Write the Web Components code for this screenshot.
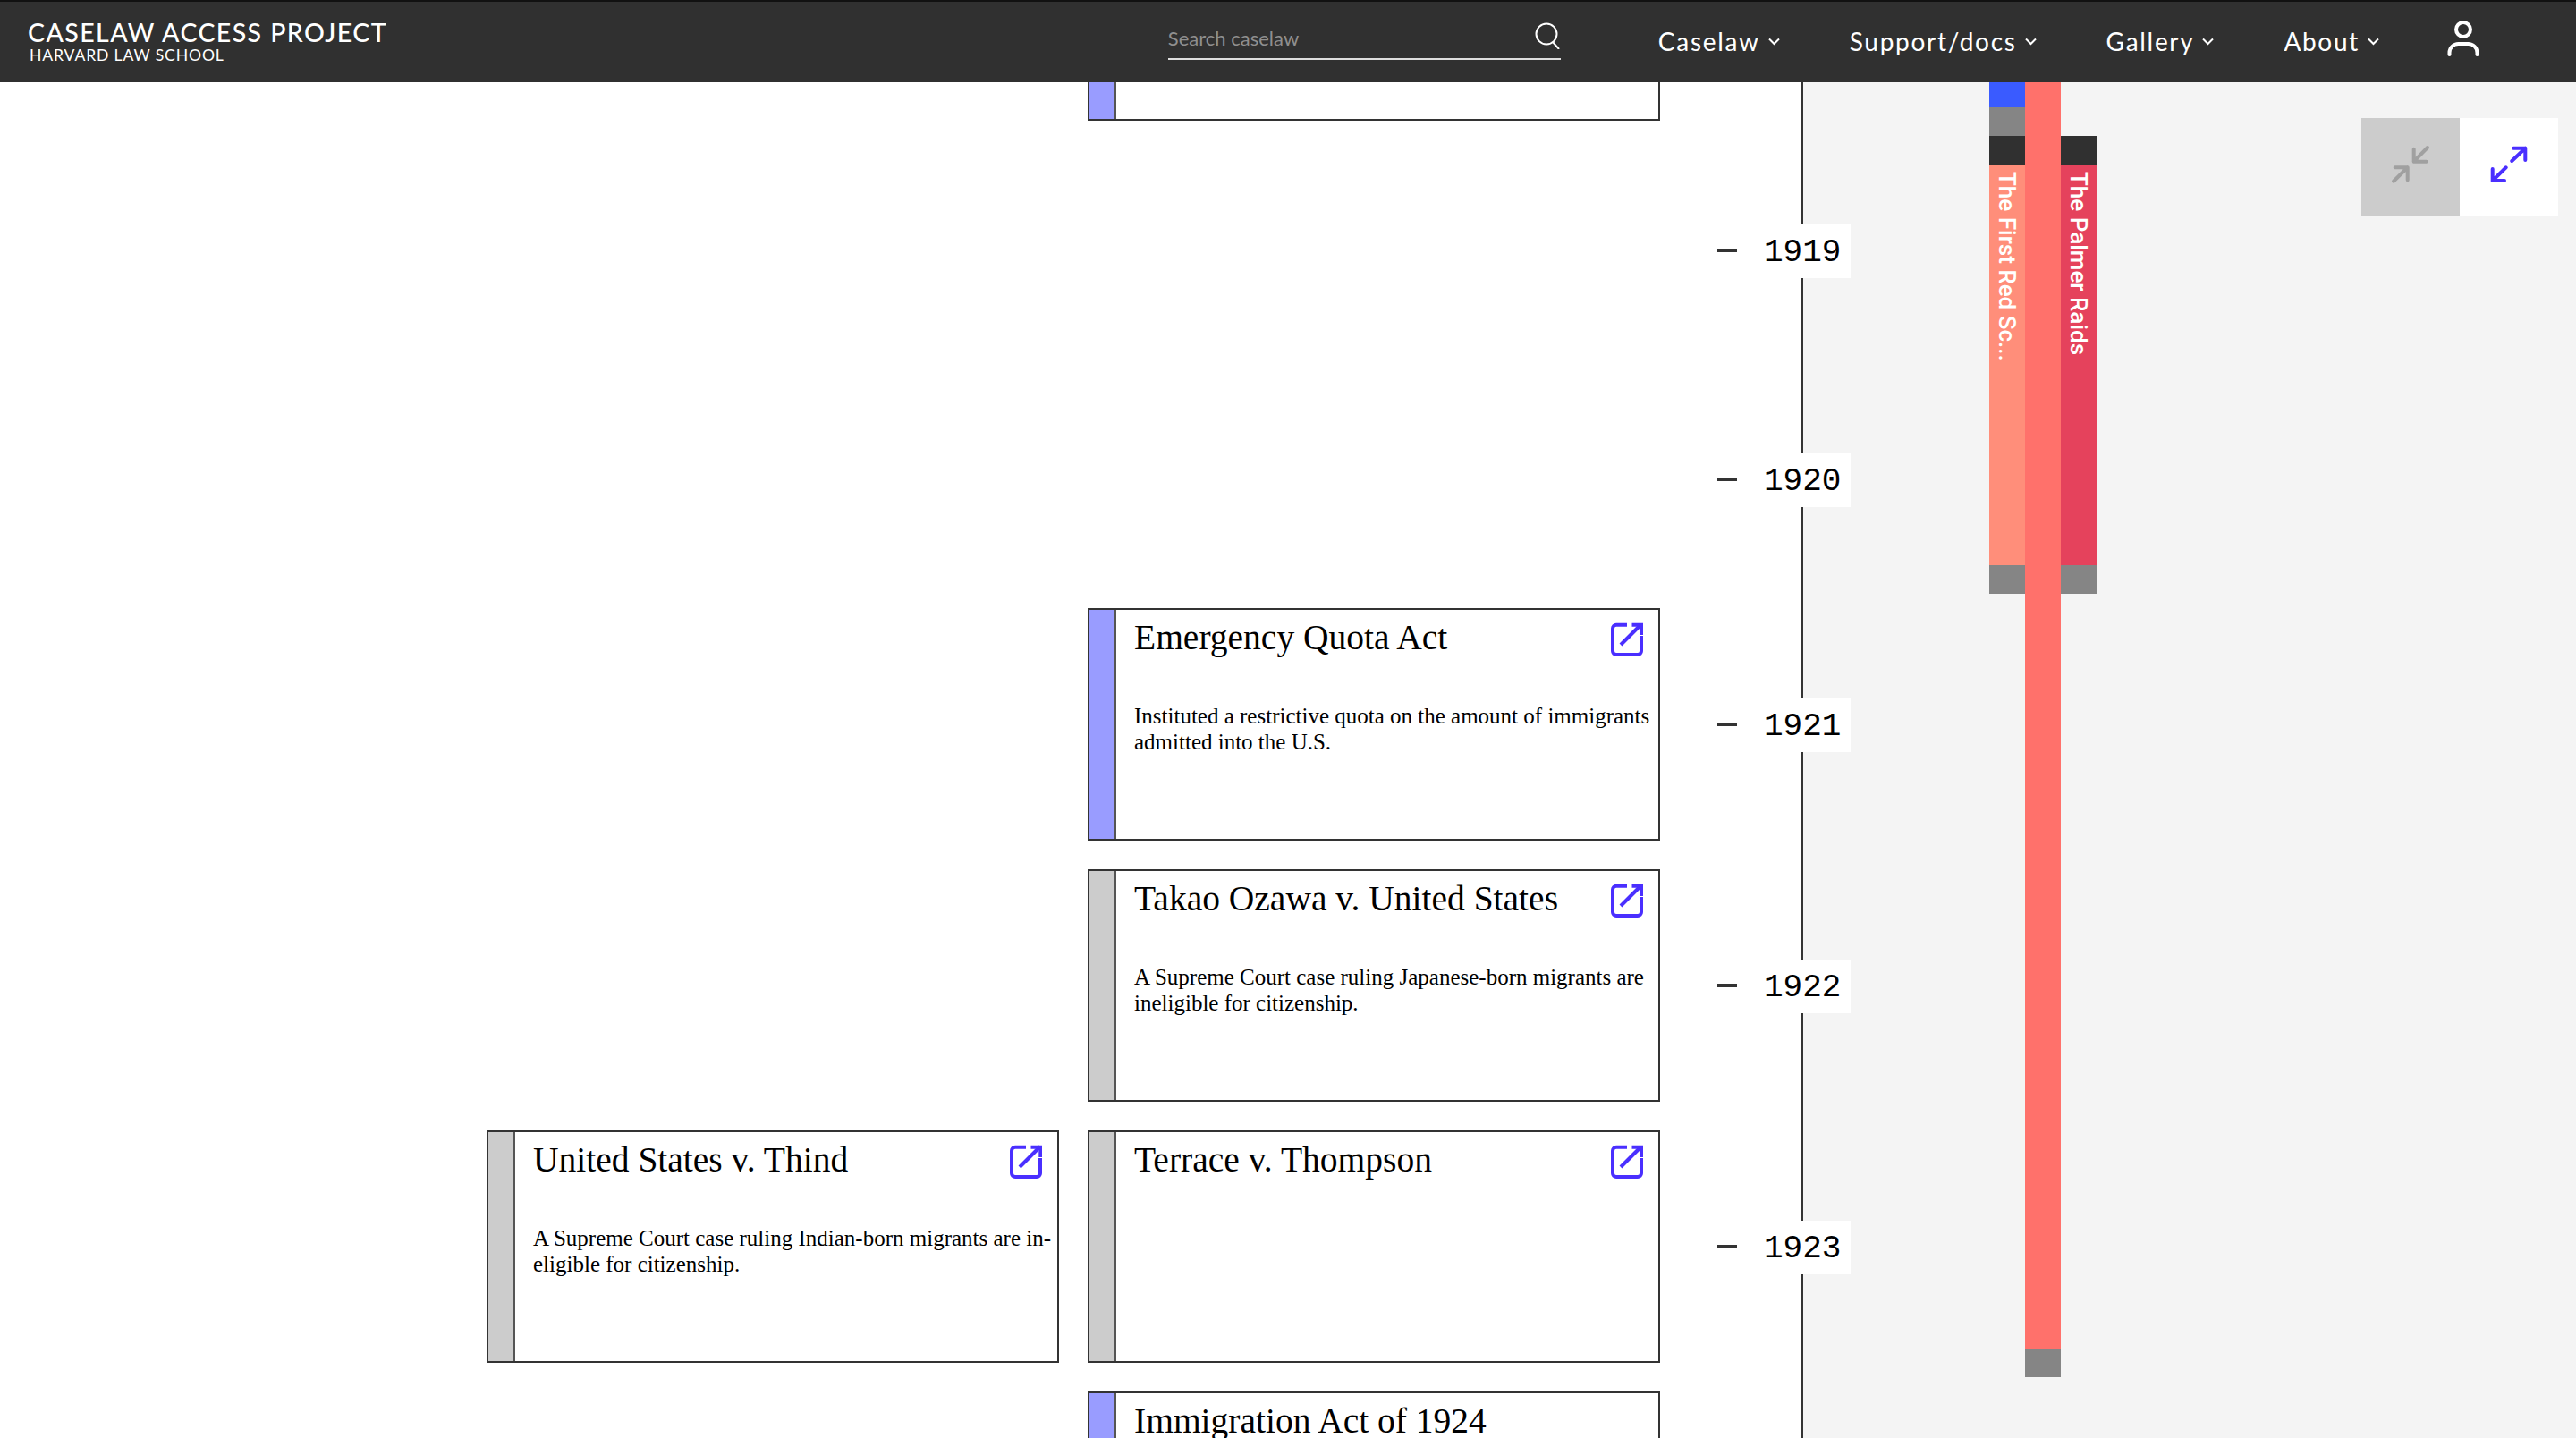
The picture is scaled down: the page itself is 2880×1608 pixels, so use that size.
<!DOCTYPE html>
<html lang="en">
<head>
<meta charset="utf-8">
<title>Caselaw Access Project</title>
<style>
  html, body { margin: 0; height: 100%; overflow: hidden; background: #fff; }
  body { display: flex; flex-direction: column; height: 1608px; }
</style>
</head>
<body>
<cap-header>
  <nav-item>Caselaw</nav-item>
  <nav-item>Support/docs</nav-item>
  <nav-item>Gallery</nav-item>
  <nav-item>About</nav-item>
</cap-header>

<timeline-view>
  <case-column slot="cases" style="--start: 1172px">
    <case-card kind="case">
      <span slot="title">United States v. Thind</span>
      A Supreme Court case ruling Indian-born migrants are in-<br>eligible for citizenship.
    </case-card>
  </case-column>
  <case-column slot="cases" style="--start: -217px">
    <case-card kind="law" nolink style="margin-bottom: 513px"></case-card>
    <case-card kind="law">
      <span slot="title">Emergency Quota Act</span>
      Instituted a restrictive quota on the amount of immigrants<br>admitted into the U.S.
    </case-card>
    <case-card kind="case">
      <span slot="title">Takao Ozawa v. United States</span>
      A Supreme Court case ruling Japanese-born migrants are<br>ineligible for citizenship.
    </case-card>
    <case-card kind="case">
      <span slot="title">Terrace v. Thompson</span>
    </case-card>
    <case-card kind="law" nolink>
      <span slot="title">Immigration Act of 1924</span>
    </case-card>
  </case-column>

  <year-mark slot="years" style="margin-top: 159px">1919</year-mark>
  <year-mark slot="years" style="margin-top: 196px">1920</year-mark>
  <year-mark slot="years" style="margin-top: 214px">1921</year-mark>
  <year-mark slot="years" style="margin-top: 232px">1922</year-mark>
  <year-mark slot="years" style="margin-top: 232px">1923</year-mark>

  <event-lane slot="events">
    <event-seg style="--c: #3a5bff; --h: 28px"></event-seg>
    <event-seg style="--c: #858585; --h: 32px"></event-seg>
    <event-seg style="--c: #303030; --h: 32px"></event-seg>
    <event-seg style="--c: #ff8e7a; --h: 448px">The First Red Sc...</event-seg>
    <event-seg style="--c: #858585; --h: 32px"></event-seg>
  </event-lane>
  <event-lane slot="events">
    <event-seg style="--c: #ff716b; --h: 1416px"></event-seg>
    <event-seg style="--c: #858585; --h: 32px"></event-seg>
  </event-lane>
  <event-lane slot="events" style="--start: 60px">
    <event-seg style="--c: #303030; --h: 32px"></event-seg>
    <event-seg style="--c: #e5425c; --h: 448px">The Palmer Raids</event-seg>
    <event-seg style="--c: #858585; --h: 32px"></event-seg>
  </event-lane>
  <zoom-controls slot="overlay"></zoom-controls>
</timeline-view>

<script>
class CapHeader extends HTMLElement {
    connectedCallback() {
        this.attachShadow({ mode: "open" }).innerHTML = `
            <style>
                :host {
                    display: flex;
                    flex: none;
                    box-sizing: border-box;
                    height: 92px;
                    justify-content: space-between;
                    padding: 0 107px 0 31px;
                    background: #303030;
                    border-top: 2px solid #111;
                    color: #fff;
                }
                .logo { font-family: Lato, sans-serif; padding-top: 19px; }
                .name { font-size: 28.5px; line-height: 30px; font-weight: 500; letter-spacing: 1.42px; }
                .school { font-size: 17.6px; line-height: 20px; margin: 1px 0 0 2px; letter-spacing: 0.85px; }
                .right { display: flex; align-items: flex-start; }
                .search {
                    display: flex;
                    justify-content: space-between;
                    box-sizing: border-box;
                    width: 439px;
                    height: 65px;
                    margin-right: 109px;
                    border-bottom: 2px solid #ddd;
                    font: 22px Lato, sans-serif;
                    color: #8f8f8f;
                }
                .search span { padding-top: 27px; }
                .search svg { margin-top: 23px; }
                nav { display: flex; gap: 78px; }
                .user { margin: 20px 0 0 75px; }
            </style>
            <div class="logo">
                <div class="name">CASELAW ACCESS PROJECT</div>
                <div class="school">HARVARD LAW SCHOOL</div>
            </div>
            <div class="right">
                <div class="search">
                    <span>Search caselaw</span>
                    <svg width="30" height="30" viewBox="0 0 30 30" fill="none" stroke="#fff" stroke-width="2">
                        <circle cx="14" cy="13" r="11.5"/>
                        <path d="M21 22l7 8"/>
                    </svg>
                </div>
                <nav><slot></slot></nav>
                <svg class="user" width="38" height="42" viewBox="0 0 38 42" fill="none" stroke="#fff" stroke-width="4" stroke-linecap="round">
                    <circle cx="19" cy="11" r="8"/>
                    <path d="M3.5 39v-2a10 10 0 0 1 10-10h11a10 10 0 0 1 10 10v2"/>
                </svg>
            </div>
        `;
    }
}

class NavItem extends HTMLElement {
    connectedCallback() {
        this.attachShadow({ mode: "open" }).innerHTML = `
            <style>
                :host {
                    display: flex;
                    gap: 9px;
                    padding-top: 23px;
                    font: 28px/42px Lato, sans-serif;
                    letter-spacing: 1.7px;
                    color: #fff;
                }
                svg { margin-top: 17px; }
            </style>
            <slot></slot>
            <svg width="13" height="9" viewBox="0 0 13 9" fill="none" stroke="#fff" stroke-width="2">
                <path d="M1 1.5l5.5 5.5L12 1.5"/>
            </svg>
        `;
    }
}

class TimelineView extends HTMLElement {
    connectedCallback() {
        this.attachShadow({ mode: "open" }).innerHTML = `
            <style>
                :host {
                    display: grid;
                    flex: 1;
                    grid-template-columns: 1856px 160px 1fr;
                    min-height: 0;
                    overflow: hidden;
                    background: #fff;
                }
                .cases { display: flex; gap: 32px; padding-left: 544px; }
                .axis {
                    position: relative;
                    z-index: 1;
                    display: flex;
                    flex-direction: column;
                    box-sizing: border-box;
                    border-right: 2px solid #333;
                }
                .events {
                    position: relative;
                    display: flex;
                    padding-left: 208px;
                    background: #f4f4f4;
                }
            </style>
            <div class="cases"><slot name="cases"></slot></div>
            <div class="axis"><slot name="years"></slot></div>
            <div class="events"><slot name="events"></slot><slot name="overlay"></slot></div>
        `;
    }
}

class CaseColumn extends HTMLElement {
    connectedCallback() {
        this.attachShadow({ mode: "open" }).innerHTML = `
            <style>
                :host {
                    display: flex;
                    flex-direction: column;
                    gap: 32px;
                    width: 640px;
                    margin-top: var(--start, 0);
                }
            </style>
            <slot></slot>
        `;
    }
}

class CaseCard extends HTMLElement {
    connectedCallback() {
        const stripe = this.getAttribute("kind") === "law" ? "#999cff" : "#ccc";
        const link = this.hasAttribute("nolink") ? "" : `
            <svg width="36" height="38" viewBox="11 11 36 38" fill="none" stroke="#4a2fff" stroke-width="4">
                <path d="M29 13.7H17a4 4 0 0 0-4 4V43a4 4 0 0 0 4 4h24a4 4 0 0 0 4-4V26"/>
                <path d="M22 36l23-23"/>
                <path d="M34.5 13.7h10.8V25"/>
            </svg>`;
        this.attachShadow({ mode: "open" }).innerHTML = `
            <style>
                :host {
                    display: grid;
                    flex: none;
                    grid-template-columns: 30px 1fr;
                    box-sizing: border-box;
                    height: 260px;
                    border: 2px solid #333;
                    font-family: "Liberation Serif", serif;
                    color: #000;
                    background: #fff;
                }
                .stripe { background: ${stripe}; border-right: 2px solid #555; }
                .body { padding: 0 0 0 20px; min-width: 0; }
                .head { display: flex; justify-content: space-between; height: 104px; padding: 14px 17px 0 0; box-sizing: border-box; }
                .title { margin-top: -7px; font-size: 39.5px; line-height: 48px; }
                svg { flex: none; }
                .desc { font-size: 25px; line-height: 29px; white-space: nowrap; }
            </style>
            <div class="stripe"></div>
            <div class="body">
                <div class="head">
                    <div class="title"><slot name="title"></slot></div>
                    ${link}
                </div>
                <div class="desc"><slot></slot></div>
            </div>
        `;
    }
}

class YearMark extends HTMLElement {
    connectedCallback() {
        this.attachShadow({ mode: "open" }).innerHTML = `
            <style>
                :host {
                    display: flex;
                    flex: none;
                    align-items: center;
                    width: 149px;
                    height: 60px;
                    margin-left: 64px;
                    font: 36px/63px "Liberation Mono", monospace;
                    color: #000;
                }
                .dash { flex: none; width: 22px; height: 4px; margin-top: -3px; background: #333; }
                .label {
                    flex: none;
                    box-sizing: border-box;
                    width: 109px;
                    height: 60px;
                    margin-left: 18px;
                    padding-left: 12px;
                    background: #fff;
                }
            </style>
            <div class="dash"></div>
            <div class="label"><slot></slot></div>
        `;
    }
}

class EventLane extends HTMLElement {
    connectedCallback() {
        this.attachShadow({ mode: "open" }).innerHTML = `
            <style>
                :host {
                    display: flex;
                    flex-direction: column;
                    width: 40px;
                    margin-top: var(--start, 0);
                }
            </style>
            <slot></slot>
        `;
    }
}

class EventSeg extends HTMLElement {
    connectedCallback() {
        this.attachShadow({ mode: "open" }).innerHTML = `
            <style>
                :host {
                    display: block;
                    flex: none;
                    box-sizing: border-box;
                    height: var(--h);
                    padding-top: 8px;
                    background: var(--c);
                    writing-mode: vertical-rl;
                    font: 500 26px/40px Roboto, sans-serif;
                    color: #fff;
                    white-space: nowrap;
                    overflow: hidden;
                }
            </style>
            <slot></slot>
        `;
    }
}

class ZoomControls extends HTMLElement {
    connectedCallback() {
        this.attachShadow({ mode: "open" }).innerHTML = `
            <style>
                :host { position: absolute; top: 40px; right: 20px; display: flex; }
                button { display: block; width: 110px; height: 110px; padding: 0; border: 0; }
                svg { display: block; fill: none; stroke-width: 4; stroke-linecap: round; stroke-linejoin: round; }
                .out { background: #ccc; }
                .in { background: #fff; }
            </style>
            <button class="out" aria-label="Zoom out">
                <svg width="110" height="110" viewBox="0 0 110 110" stroke="#a0a0a0">
                    <path d="M74 33L58.7 48.7M58.7 34.7v14h14M36 70.7l15.7-15.4M37.7 55.3h14v14"/>
                </svg>
            </button>
            <button class="in" aria-label="Zoom in">
                <svg width="110" height="110" viewBox="0 0 110 110" stroke="#4a2fff">
                    <path d="M58.3 48l15-14.3M60 33.7h13.3V47M51.7 55.3l-15 14.7M36.7 57v13H50"/>
                </svg>
            </button>
        `;
    }
}

customElements.define("cap-header", CapHeader);
customElements.define("nav-item", NavItem);
customElements.define("timeline-view", TimelineView);
customElements.define("case-column", CaseColumn);
customElements.define("case-card", CaseCard);
customElements.define("year-mark", YearMark);
customElements.define("event-lane", EventLane);
customElements.define("event-seg", EventSeg);
customElements.define("zoom-controls", ZoomControls);
</script>
</body>
</html>
